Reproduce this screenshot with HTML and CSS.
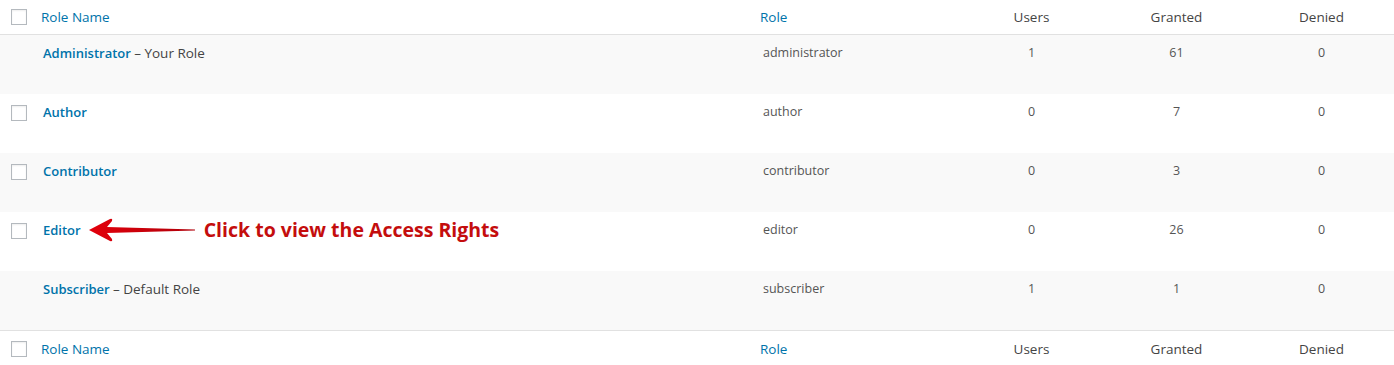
FILE: index.html
```html
<!DOCTYPE html>
<html lang="en">
<head>
  <meta charset="UTF-8" />
  <title>Roles</title>
  <link rel="stylesheet" href="styles.css">
</head>
<body>
  <table class="roles-table">
    <colgroup>
      <col class="col-check">
      <col class="col-name">
      <col class="col-role">
      <col class="col-num">
      <col class="col-num">
      <col class="col-num">
    </colgroup>
    <thead>
      <tr>
        <th class="check-column"><span class="checkbox"></span></th>
        <th class="link-head">Role Name</th>
        <th class="link-head role-head">Role</th>
        <th class="num">Users</th>
        <th class="num">Granted</th>
        <th class="num">Denied</th>
      </tr>
    </thead>
    <tbody>
      <tr class="alt">
        <td class="check-column"></td>
        <td><a href="#" class="row-title">Administrator</a> <span class="role-note">– Your Role</span></td>
        <td>administrator</td>
        <td class="num">1</td>
        <td class="num">61</td>
        <td class="num">0</td>
      </tr>
      <tr>
        <td class="check-column"><span class="checkbox"></span></td>
        <td><a href="#" class="row-title">Author</a></td>
        <td>author</td>
        <td class="num">0</td>
        <td class="num">7</td>
        <td class="num">0</td>
      </tr>
      <tr class="alt">
        <td class="check-column"><span class="checkbox"></span></td>
        <td><a href="#" class="row-title">Contributor</a></td>
        <td>contributor</td>
        <td class="num">0</td>
        <td class="num">3</td>
        <td class="num">0</td>
      </tr>
      <tr>
        <td class="check-column"><span class="checkbox"></span></td>
        <td>
          <div class="hint-line">
            <a href="#" class="row-title">Editor</a>
            <svg class="hint-arrow" width="106" height="24" viewBox="0 0 106 24">
              <defs>
                <linearGradient id="arrowFill" x1="0" y1="0" x2="1" y2="0">
                  <stop offset="0" stop-color="#e3000b"/>
                  <stop offset="1" stop-color="#b0000a"/>
                </linearGradient>
              </defs>
              <path d="M0 12 L21 1 Q24 0 23 3 L18 9 L106 11.5 L106 12.5 L18 15 L23 21 Q24 24 21 23 Z" fill="url(#arrowFill)"/>
            </svg>
            <span class="hint-text">Click to view the Access Rights</span>
          </div>
        </td>
        <td>editor</td>
        <td class="num">0</td>
        <td class="num">26</td>
        <td class="num">0</td>
      </tr>
      <tr class="alt last">
        <td class="check-column"></td>
        <td><a href="#" class="row-title">Subscriber</a> <span class="role-note">– Default Role</span></td>
        <td>subscriber</td>
        <td class="num">1</td>
        <td class="num">1</td>
        <td class="num">0</td>
      </tr>
    </tbody>
    <tfoot>
      <tr>
        <th class="check-column"><span class="checkbox"></span></th>
        <th class="link-head">Role Name</th>
        <th class="link-head role-head">Role</th>
        <th class="num">Users</th>
        <th class="num">Granted</th>
        <th class="num">Denied</th>
      </tr>
    </tfoot>
  </table>
</body>
</html>
```

FILE: styles.css
```css
body {
  margin: 0;
  background: #ffffff;
  font-family: "Open Sans", "Noto Sans", sans-serif;
  color: #555;
}

.roles-table {
  width: 1394px;
  border-collapse: collapse;
  table-layout: fixed;
}

.col-check {
  width: 31px;
}

.col-role {
  width: 208px;
}

.col-num {
  width: 145px;
}

th {
  height: 34px;
  padding: 0 10px;
  font-weight: normal;
  font-size: 13.5px;
  line-height: 20px;
  text-align: left;
  color: #444;
  vertical-align: middle;
}

thead th {
  border-bottom: 1px solid #e1e1e1;
}

tfoot th {
  height: 35px;
  box-sizing: border-box;
  padding-top: 8px;
  vertical-align: top;
  border-top: 1px solid #e1e1e1;
}

th.link-head {
  color: #0073aa;
}

th.role-head {
  padding-left: 9px;
}

td {
  height: 59px;
  box-sizing: border-box;
  padding: 8px 10px 0 12px;
  font-size: 12.5px;
  line-height: 20px;
  vertical-align: top;
  color: #555;
}

tr.last td {
  height: 60px;
}

tr.alt td {
  background: #f9f9f9;
}

.num {
  text-align: center;
}

td.num {
  padding-left: 10px;
}

th.check-column,
td.check-column {
  padding: 0 0 0 11px;
}

td.check-column {
  padding-top: 11px;
}

tfoot th.check-column {
  padding-top: 10px;
}

.checkbox {
  display: block;
  width: 14px;
  height: 14px;
  border: 1px solid #b4b9be;
  background: #fff;
  box-shadow: inset 0 1px 2px rgba(0, 0, 0, 0.07);
}

.row-title {
  color: #0073aa;
  font-weight: 600;
  font-size: 13px;
  text-decoration: none;
}

.role-note {
  font-size: 13.5px;
  color: #444;
}

.hint-line {
  display: flex;
  align-items: center;
  height: 20px;
}

.hint-arrow {
  margin-left: 8px;
  flex: none;
}

.hint-text {
  margin-left: 9px;
  font-size: 19.5px;
  font-weight: 700;
  color: #c40d0d;
  white-space: nowrap;
}
```
